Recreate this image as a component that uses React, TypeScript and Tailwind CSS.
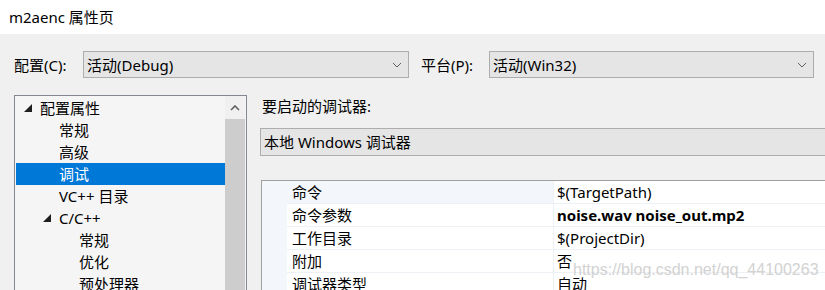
import React from "react";

const font = { fontFamily: '"Noto Sans", "Noto Sans CJK SC", sans-serif' };

function Chevron() {
  return (
    <svg width="10" height="6" viewBox="0 0 10 6" className="shrink-0">
      <polyline points="1,1 5,5 9,1" fill="none" stroke="#606060" strokeWidth="1" />
    </svg>
  );
}

function Tri() {
  return (
    <svg width="8" height="8" viewBox="0 0 8 8" className="shrink-0">
      <polygon points="8,0 8,8 0,8" fill="#1e1e1e" />
    </svg>
  );
}

function Select({ text, w }: { text: string; w: string }) {
  return (
    <div className={`${w} h-[27px] border border-[#adadad] bg-[#e5e5e5] flex items-center pl-[3px] pr-[6px]`}>
      <span className="flex-1 text-[15px] leading-[20px] text-black">{text}</span>
      <Chevron />
    </div>
  );
}

const tree: { t: string; indent: number; tri?: boolean; sel?: boolean }[] = [
  { t: "配置属性", indent: 0, tri: true },
  { t: "常规", indent: 1 },
  { t: "高级", indent: 1 },
  { t: "调试", indent: 1, sel: true },
  { t: "VC++ 目录", indent: 1 },
  { t: "C/C++", indent: 1, tri: true },
  { t: "常规", indent: 2 },
  { t: "优化", indent: 2 },
  { t: "预处理器", indent: 2 },
];

const props: { n: string; v: string; bold?: boolean; hl?: boolean }[] = [
  { n: "命令", v: "$(TargetPath)", hl: true },
  { n: "命令参数", v: "noise.wav noise_out.mp2", bold: true },
  { n: "工作目录", v: "$(ProjectDir)" },
  { n: "附加", v: "否" },
  { n: "调试器类型", v: "自动" },
];

export default function App() {
  return (
    <div className="w-[825px] h-[290px] overflow-hidden bg-[#f0f0f0] relative text-black" style={font}>
      <div className="h-[34px] bg-white flex items-center pl-[9px] text-[15px] leading-[20px]">m2aenc 属性页</div>

      <div className="mt-[17px] h-[27px] flex items-center">
        <div className="w-[83px] pl-[14px] text-[15px] leading-[20px]">配置(C):</div>
        <Select text="活动(Debug)" w="w-[326px]" />
        <div className="ml-[12px] w-[68px] text-[15px] leading-[20px]">平台(P):</div>
        <Select text="活动(Win32)" w="w-[325px]" />
      </div>

      <div className="mt-[17px] flex">
        <div className="ml-[14px] w-[233px] h-[220px] shrink-0 border border-[#828790] bg-[#f5f5f5] flex pl-[1px] pt-[1px]">
          <div className="flex-1 flex flex-col">
            {tree.map((r, i) => (
              <div
                key={i}
                className={`h-[22px] flex items-center text-[15px] leading-[20px] ${r.sel ? "bg-[#0078d7] text-white" : ""}`}
              >
                <div
                  className={`shrink-0 flex items-center ${
                    r.indent === 0 ? "w-[24px] pl-[8px]" : r.indent === 1 ? "w-[43px] pl-[27px]" : "w-[63px]"
                  }`}
                >
                  {r.tri ? <Tri /> : null}
                </div>
                <span className="whitespace-nowrap">{r.t}</span>
              </div>
            ))}
          </div>
          <div className="w-[20px] mr-[1px] flex flex-col -mt-[1px]">
            <div className="h-[23px] bg-[#f0f0f0] flex items-center justify-center">
              <svg width="10" height="6" viewBox="0 0 10 6">
                <polyline points="1,5 5,1 9,5" fill="none" stroke="#606060" strokeWidth="1.6" />
              </svg>
            </div>
            <div className="flex-1 bg-[#cdcdcd]" />
          </div>
        </div>

        <div className="ml-[13px] w-[700px] shrink-0 flex flex-col">
          <div className="h-[22px] flex items-center pl-[2px] text-[15px] leading-[20px]">要启动的调试器:</div>
          <div className="mt-[11px] h-[28px] border border-[#adadad] bg-[#e5e5e5] flex items-center pl-[3px] text-[15px] leading-[20px]">
            本地 Windows 调试器
          </div>
          <div className="mt-[24px] ml-[1px] border-l border-t border-[#a0a0a0] bg-white flex flex-col">
            {props.map((p, i) => (
              <div key={i} className="h-[23px] flex">
                <div className="w-[25px] shrink-0 bg-[#f3f6fb]" />
                <div
                  className={`w-[267px] shrink-0 border-b border-r border-[#edf0f5] flex items-center pl-[5px] text-[15px] leading-[20px] ${
                    p.hl ? "bg-[#f3f6fb]" : ""
                  }`}
                >
                  {p.n}
                </div>
                <div
                  className={`flex-1 border-b border-[#edf0f5] flex items-center pl-[3px] text-[15px] leading-[20px] ${
                    p.bold ? "font-bold" : ""
                  }`}
                >
                  {p.v}
                </div>
              </div>
            ))}
          </div>
        </div>
      </div>

      <div
        className="absolute left-[573px] top-[260px] text-[16px] leading-[20px] text-[#c8c8c8] opacity-80"
        style={{ fontFamily: '"Liberation Sans", Arial, sans-serif' }}
      >
        https://blog.csdn.net/qq_44100263
      </div>
    </div>
  );
}
